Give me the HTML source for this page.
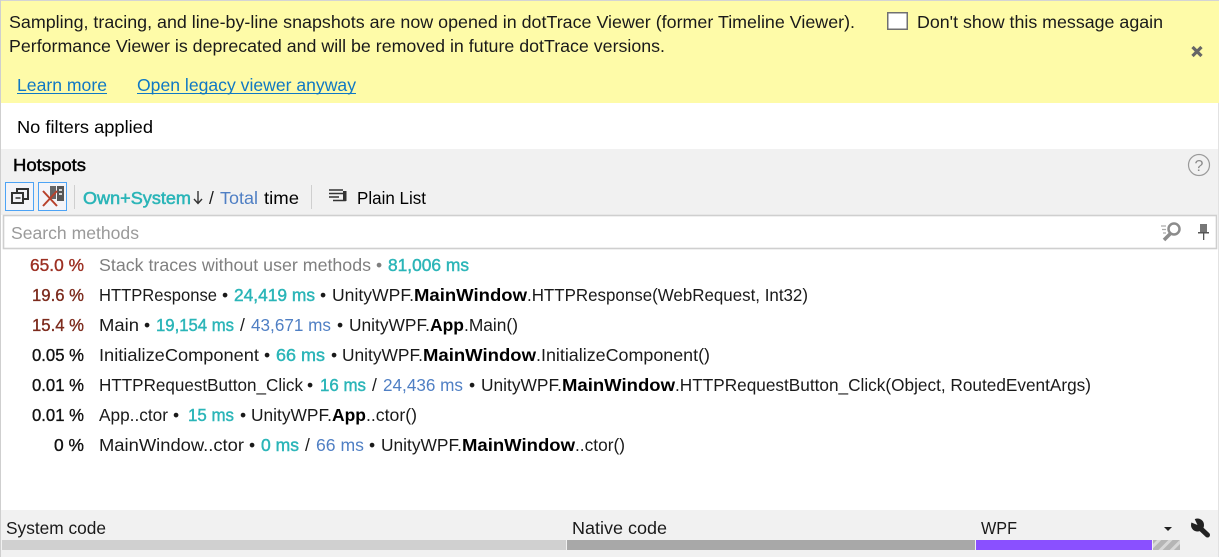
<!DOCTYPE html>
<html><head><meta charset="utf-8">
<style>
html,body{margin:0;padding:0;background:#fff;width:1219px;height:557px;overflow:hidden}
svg{display:block}
text{font-family:"Liberation Sans",sans-serif;font-size:17.5px;fill:#1a1a1a}
.b{font-weight:bold;fill:#000}
.t{fill:#2bb5b8;stroke:#2bb5b8;stroke-width:.45}
.l{fill:#4f7fc4}
.g{fill:#7f7f7f}
.r{fill:#9c2f22;stroke:#9c2f22;stroke-width:.35}
.r2{fill:#7c2a1c;stroke:#7c2a1c;stroke-width:.35}
.p{fill:#111;stroke:#111;stroke-width:.35}
.k{fill:#000}
.a{fill:#0f78c4}
</style></head><body>
<svg width="1219" height="557" viewBox="0 0 1219 557" xmlns="http://www.w3.org/2000/svg">
<defs><pattern id="h" width="8" height="8" patternUnits="userSpaceOnUse" patternTransform="rotate(45)"><rect width="8" height="8" fill="#b5b5b5"/><rect width="3" height="8" fill="#d8d8d8"/></pattern></defs>
<rect width="1219" height="557" fill="#fff"/>
<rect x="0" y="1" width="1219" height="102" fill="#fefba8"/>
<rect x="0" y="0" width="1219" height="1" fill="#d4d4d4"/>
<rect x="0" y="149" width="1219" height="66" fill="#f1f1f1"/>
<rect x="0" y="510" width="1219" height="47" fill="#f1f1f1"/>
<rect x="0" y="0" width="1" height="557" fill="#cfcfcf"/>
<rect x="1218" y="103" width="1" height="454" fill="#e2e2e2"/>

<text x="9" y="28" textLength="846" lengthAdjust="spacingAndGlyphs">Sampling, tracing, and line-by-line snapshots are now opened in dotTrace Viewer (former Timeline Viewer).</text>
<text x="9" y="52" textLength="656" lengthAdjust="spacingAndGlyphs">Performance Viewer is deprecated and will be removed in future dotTrace versions.</text>
<rect x="887.750" y="12.750" width="19.500" height="16.500" fill="#fff" stroke="#707070" stroke-width="1.500"/>
<text x="917" y="28" textLength="246" lengthAdjust="spacingAndGlyphs">Don't show this message again</text>
<path d="M1192.500 47l9 9M1201.500 47l-9 9" stroke="#666" stroke-width="3.200" fill="none"/>
<text class="a" x="17" y="91" textLength="90" lengthAdjust="spacingAndGlyphs">Learn more</text>
<rect x="17" y="93" width="90" height="1" fill="#0f78c4"/>
<text class="a" x="137" y="91" textLength="219" lengthAdjust="spacingAndGlyphs">Open legacy viewer anyway</text>
<rect x="137" y="93" width="219" height="1" fill="#0f78c4"/>

<text class="k" x="17" y="133" textLength="136" lengthAdjust="spacingAndGlyphs">No filters applied</text>

<text class="k" x="13" y="171" textLength="73" lengthAdjust="spacingAndGlyphs" style="stroke:#000;stroke-width:.45">Hotspots</text>
<circle cx="1199" cy="165" r="10.500" fill="none" stroke="#9a9a9a" stroke-width="1.200"/>
<text x="1199" y="171" text-anchor="middle" style="font-size:16px;fill:#8a8a8a">?</text>

<rect x="5.500" y="182.500" width="28" height="28" fill="#f4f4f8" stroke="#4da3f5"/>
<g fill="none" stroke="#333" stroke-width="2">
<path d="M17 192v-3h11v10h-4"/><path d="M23 193H12v10h11z"/>
</g>
<path d="M15.500 198h5" stroke="#333" stroke-width="1.500" fill="none"/>
<rect x="38.500" y="182.500" width="28" height="28" fill="#f4f4f8" stroke="#4da3f5"/>
<rect x="50" y="186" width="6" height="13" fill="#666"/>
<rect x="57" y="186" width="7" height="15" fill="#555"/>
<path d="M59 190h3M59 194h3" stroke="#fff" stroke-width="1.500"/>
<path d="M43 191l14 15M57 191l-14 15" stroke="#b8412c" stroke-width="2"/>
<rect x="74" y="185" width="1" height="24" fill="#cfcfcf"/>

<text class="t" x="83" y="204" textLength="108" lengthAdjust="spacingAndGlyphs" style="stroke-width:.55">Own+System</text>
<path d="M198 191v12M194 199l4 4.500 4-4.500" fill="none" stroke="#333" stroke-width="1.400"/>
<text x="209" y="204">/</text>
<text class="l" x="220" y="204" textLength="38" lengthAdjust="spacingAndGlyphs">Total</text>
<text class="k" x="264" y="204" textLength="35" lengthAdjust="spacingAndGlyphs">time</text>
<rect x="311" y="185" width="1" height="24" fill="#cfcfcf"/>
<path d="M329 190h14M329 193.500h14M329 197h10" stroke="#333" stroke-width="1.400" fill="none"/>
<path d="M333 200.500h12v-9" stroke="#333" stroke-width="1.600" fill="none"/>
<rect x="343" y="191" width="3.500" height="10" fill="#333"/>
<text class="k" x="357" y="204" textLength="69" lengthAdjust="spacingAndGlyphs">Plain List</text>

<rect x="3.500" y="215.500" width="1213" height="33" fill="#fff" stroke="#cfcfcf" stroke-width="1.600"/>
<text x="11" y="239" textLength="128" lengthAdjust="spacingAndGlyphs" style="fill:#9a9a9a">Search methods</text>
<circle cx="1174" cy="229" r="5.500" fill="none" stroke="#8c8c8c" stroke-width="2.500"/>
<path d="M1170 234l-6 6" stroke="#8c8c8c" stroke-width="3.500"/>
<path d="M1161 226h5M1162 229.500h4M1163 233h3" stroke="#aaa" stroke-width="1.200"/>
<rect x="1200" y="224" width="7" height="8" fill="#777"/>
<rect x="1198" y="232" width="11" height="1.500" fill="#555"/>
<rect x="1203" y="233" width="1.300" height="7" fill="#555"/>

<text class="r" x="30" y="271" textLength="54" lengthAdjust="spacingAndGlyphs">65.0 %</text>
<text class="g" x="99" y="271" textLength="272" lengthAdjust="spacingAndGlyphs">Stack traces without user methods</text>
<text class="g" x="376" y="271">•</text>
<text class="t" x="388" y="271" textLength="81" lengthAdjust="spacingAndGlyphs">81,006 ms</text>

<text class="r2" x="32" y="301" textLength="52" lengthAdjust="spacingAndGlyphs">19.6 %</text>
<text x="99" y="301" textLength="118" lengthAdjust="spacingAndGlyphs">HTTPResponse</text>
<text x="222" y="301">•</text>
<text class="t" x="234" y="301" textLength="81" lengthAdjust="spacingAndGlyphs">24,419 ms</text>
<text x="320" y="301">•</text>
<text x="332" y="301" textLength="82" lengthAdjust="spacingAndGlyphs">UnityWPF.</text>
<text class="b" x="414" y="301" textLength="113" lengthAdjust="spacingAndGlyphs">MainWindow</text>
<text x="527" y="301" textLength="281" lengthAdjust="spacingAndGlyphs">.HTTPResponse(WebRequest, Int32)</text>

<text class="r2" x="32" y="331" textLength="52" lengthAdjust="spacingAndGlyphs">15.4 %</text>
<text x="99" y="331" textLength="40" lengthAdjust="spacingAndGlyphs">Main</text>
<text x="144" y="331">•</text>
<text class="t" x="156" y="331" textLength="78" lengthAdjust="spacingAndGlyphs">19,154 ms</text>
<text x="240" y="331">/</text>
<text class="l" x="251" y="331" textLength="80" lengthAdjust="spacingAndGlyphs">43,671 ms</text>
<text x="337" y="331">•</text>
<text x="349" y="331" textLength="81" lengthAdjust="spacingAndGlyphs">UnityWPF.</text>
<text class="b" x="430" y="331" textLength="34" lengthAdjust="spacingAndGlyphs">App</text>
<text x="464" y="331" textLength="54" lengthAdjust="spacingAndGlyphs">.Main()</text>

<text class="p" x="32" y="361" textLength="52" lengthAdjust="spacingAndGlyphs">0.05 %</text>
<text x="99" y="361" textLength="160" lengthAdjust="spacingAndGlyphs">InitializeComponent</text>
<text x="264" y="361">•</text>
<text class="t" x="276" y="361" textLength="49" lengthAdjust="spacingAndGlyphs">66 ms</text>
<text x="331" y="361">•</text>
<text x="342" y="361" textLength="81" lengthAdjust="spacingAndGlyphs">UnityWPF.</text>
<text class="b" x="423" y="361" textLength="113" lengthAdjust="spacingAndGlyphs">MainWindow</text>
<text x="536" y="361" textLength="174" lengthAdjust="spacingAndGlyphs">.InitializeComponent()</text>

<text class="p" x="32" y="391" textLength="52" lengthAdjust="spacingAndGlyphs">0.01 %</text>
<text x="99" y="391" textLength="204" lengthAdjust="spacingAndGlyphs">HTTPRequestButton_Click</text>
<text x="307" y="391">•</text>
<text class="t" x="320" y="391" textLength="46" lengthAdjust="spacingAndGlyphs">16 ms</text>
<text x="372" y="391">/</text>
<text class="l" x="383" y="391" textLength="80" lengthAdjust="spacingAndGlyphs">24,436 ms</text>
<text x="469" y="391">•</text>
<text x="481" y="391" textLength="81" lengthAdjust="spacingAndGlyphs">UnityWPF.</text>
<text class="b" x="562" y="391" textLength="113" lengthAdjust="spacingAndGlyphs">MainWindow</text>
<text x="675" y="391" textLength="416" lengthAdjust="spacingAndGlyphs">.HTTPRequestButton_Click(Object, RoutedEventArgs)</text>

<text class="p" x="32" y="421" textLength="52" lengthAdjust="spacingAndGlyphs">0.01 %</text>
<text x="99" y="421" textLength="69" lengthAdjust="spacingAndGlyphs">App..ctor</text>
<text x="173" y="421">•</text>
<text class="t" x="188" y="421" textLength="46" lengthAdjust="spacingAndGlyphs">15 ms</text>
<text x="240" y="421">•</text>
<text x="251" y="421" textLength="81" lengthAdjust="spacingAndGlyphs">UnityWPF.</text>
<text class="b" x="332" y="421" textLength="34" lengthAdjust="spacingAndGlyphs">App</text>
<text x="366" y="421" textLength="51" lengthAdjust="spacingAndGlyphs">..ctor()</text>

<text class="p" x="54" y="451" textLength="30" lengthAdjust="spacingAndGlyphs">0 %</text>
<text x="99" y="451" textLength="145" lengthAdjust="spacingAndGlyphs">MainWindow..ctor</text>
<text x="249" y="451">•</text>
<text class="t" x="261" y="451" textLength="38" lengthAdjust="spacingAndGlyphs">0 ms</text>
<text x="305" y="451">/</text>
<text class="l" x="316" y="451" textLength="48" lengthAdjust="spacingAndGlyphs">66 ms</text>
<text x="369" y="451">•</text>
<text x="381" y="451" textLength="81" lengthAdjust="spacingAndGlyphs">UnityWPF.</text>
<text class="b" x="462" y="451" textLength="113" lengthAdjust="spacingAndGlyphs">MainWindow</text>
<text x="575" y="451" textLength="50" lengthAdjust="spacingAndGlyphs">..ctor()</text>

<text x="6" y="534" textLength="100" lengthAdjust="spacingAndGlyphs">System code</text>
<text x="572" y="534" textLength="95" lengthAdjust="spacingAndGlyphs">Native code</text>
<text x="981" y="534" textLength="36" lengthAdjust="spacingAndGlyphs">WPF</text>
<rect x="2" y="540" width="564" height="10" fill="#d0d0d0"/>
<rect x="567" y="540" width="408" height="10" fill="#a8a8a8"/>
<rect x="976" y="540" width="176" height="10" fill="#8a50ff"/>
<rect x="1153" y="540" width="27" height="10" fill="url(#h)"/>
<path d="M1164 527h8l-4 4z" fill="#222"/>
<circle cx="1197.500" cy="525" r="6.500" fill="#222"/>
<path d="M1199 527l8.500 8" stroke="#222" stroke-width="5" stroke-linecap="round" fill="none"/>
<path d="M1197.500 525L1189 521.500L1193.500 516.500z" fill="#f1f1f1"/>
</svg>
</body></html>
